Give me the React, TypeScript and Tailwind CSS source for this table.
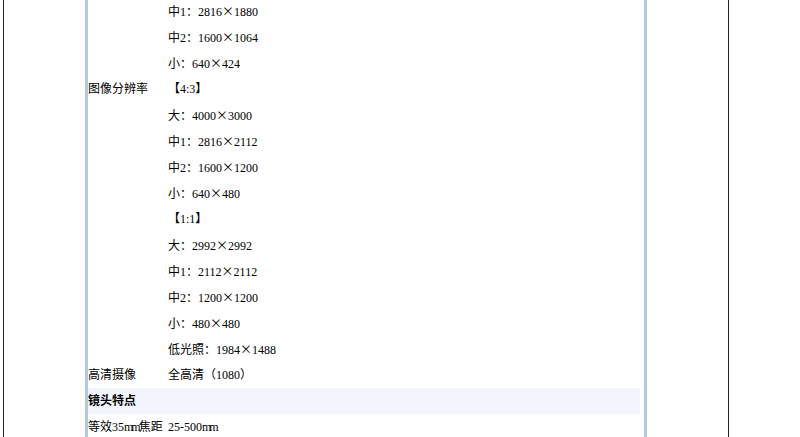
const rows: [string, string][] = [
  ['', '中1：2816×1880'],
  ['', '中2：1600×1064'],
  ['', '小：640×424'],
  ['图像分辨率', '【4:3】'],
  ['', '大：4000×3000'],
  ['', '中1：2816×2112'],
  ['', '中2：1600×1200'],
  ['', '小：640×480'],
  ['', '【1:1】'],
  ['', '大：2992×2992'],
  ['', '中1：2112×2112'],
  ['', '中2：1200×1200'],
  ['', '小：480×480'],
  ['', '低光照：1984×1488'],
  ['高清摄像', '全高清（1080）'],
];

// the multiplication sign is full width in the original, so take it from the CJK font
function Value({ text }: { text: string }) {
  const parts = text.split('×');
  return (
    <>
      {parts.map((p, i) => (
        <span key={i}>
          {i > 0 && <span className="[font-family:'Noto_Sans_CJK_SC',sans-serif]">×</span>}
          {p}
        </span>
      ))}
    </>
  );
}

export default function App() {
  return (
    <div className="h-[437px] w-[800px] overflow-hidden bg-white text-[12px] text-black [font-family:'Liberation_Serif','Noto_Sans_CJK_SC',serif]">
      <div className="ml-[3px] flex h-full w-[726px] border-x border-[#222]">
        <div className="ml-[81px] h-full w-[562px] border-x-[3px] border-[#b3c9de]">
          <div className="-mt-[2px]">
            {rows.map(([label, value], i) => (
              <div key={i} className="flex h-[26px] items-center whitespace-nowrap">
                <div className="w-[80px] shrink-0">{label}</div>
                <div><Value text={value} /></div>
              </div>
            ))}
            <div className="mr-[4px] flex h-[26px] items-center bg-[#f2f5fe] font-bold">镜头特点</div>
            <div className="flex h-[26px] items-center whitespace-nowrap">
              <div className="w-[80px] shrink-0">等效35<span className="tracking-[-2px]">mm</span>焦距</div>
              <div>25-500<span className="tracking-[-2px]">mm</span></div>
            </div>
          </div>
        </div>
      </div>
    </div>
  );
}
